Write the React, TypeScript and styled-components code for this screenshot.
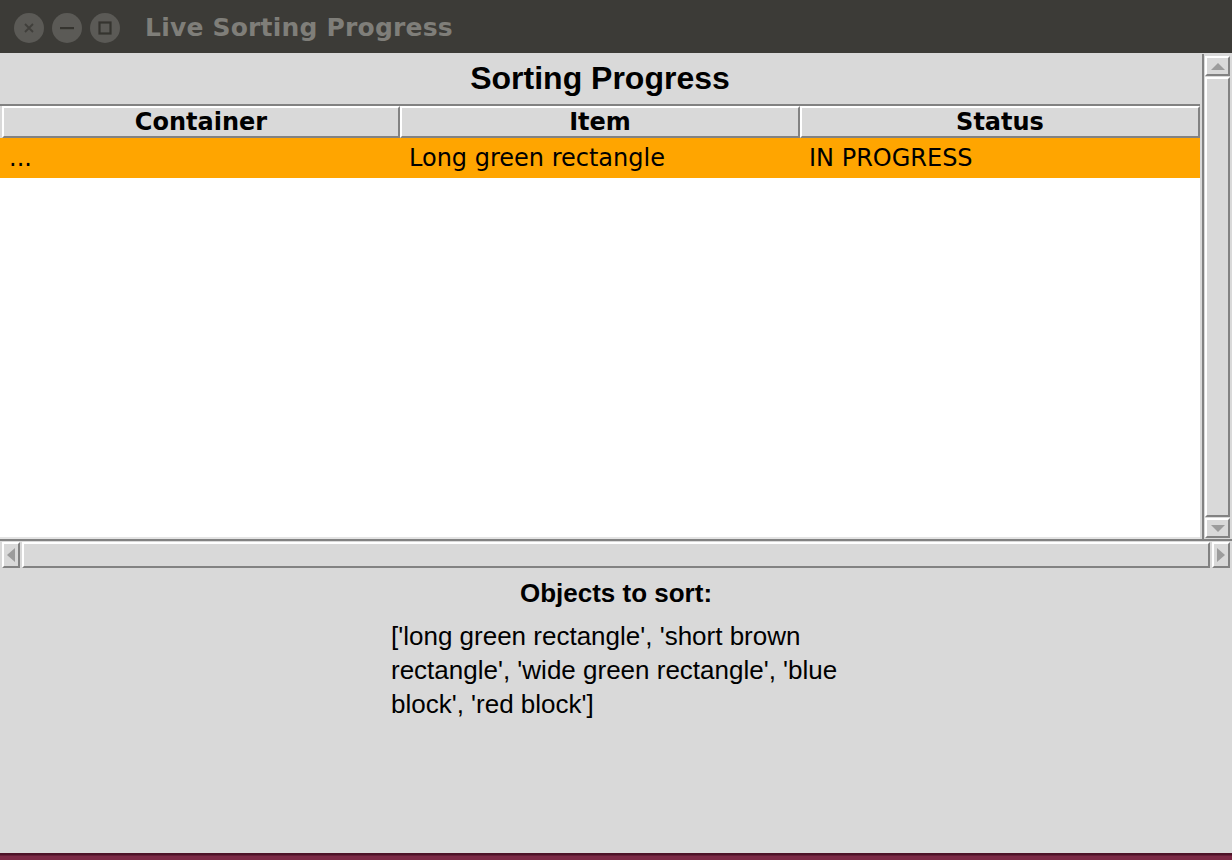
import React from "react"
import styled, { createGlobalStyle, css } from "styled-components"

const GlobalStyle = createGlobalStyle`
  html, body {
    margin: 0;
    padding: 0;
    overflow: hidden;
    background: #3c3b37;
  }
`

const columns = ["Container", "Item", "Status"]

const rows = [
  { container: "...", item: "Long green rectangle", status: "IN PROGRESS", active: true },
]

const objects = [
  "long green rectangle",
  "short brown rectangle",
  "wide green rectangle",
  "blue block",
  "red block",
]

type Dir = "up" | "down" | "left" | "right"

const arrowPoints: Record<Dir, string> = {
  up: "0,7 7,0 14,7",
  down: "0,0 14,0 7,7",
  left: "8,0 8,14 0,7",
  right: "0,0 8,7 0,14",
}

const Arrow = ({ dir }: { dir: Dir }) => {
  const vertical = dir === "up" || dir === "down"
  return (
    <svg width={vertical ? 14 : 8} height={vertical ? 7 : 14} viewBox={vertical ? "0 0 14 7" : "0 0 8 14"}>
      <polygon points={arrowPoints[dir]} fill="#9c9c9c" />
    </svg>
  )
}

const App = () => {
  return (
    <Window>
      <GlobalStyle />
      <TitleBar>
        <WinButton>
          <svg width="12" height="12" viewBox="0 0 12 12">
            <path d="M2 2 L10 10 M10 2 L2 10" stroke="#403f3b" strokeWidth="1.8" />
          </svg>
        </WinButton>
        <WinButton>
          <svg width="16" height="4" viewBox="0 0 16 4">
            <rect x="1" y="1" width="14" height="2.2" fill="#35342f" />
          </svg>
        </WinButton>
        <WinButton>
          <svg width="14" height="14" viewBox="0 0 14 14">
            <rect x="1.5" y="1.5" width="11" height="11" fill="none" stroke="#35342f" strokeWidth="2.2" />
          </svg>
        </WinButton>
        <WindowTitle>Live Sorting Progress</WindowTitle>
      </TitleBar>

      <Body>
        <TopArea>
          <TreePanel>
            <PanelTitle>Sorting Progress</PanelTitle>
            <Tree>
              <HeaderRow>
                {columns.map(c => (
                  <HeaderCell key={c}>{c}</HeaderCell>
                ))}
              </HeaderRow>
              <TreeBody>
                {rows.map((r, i) => (
                  <Row key={i} active={r.active}>
                    <Cell>{r.container}</Cell>
                    <Cell>{r.item}</Cell>
                    <Cell>{r.status}</Cell>
                  </Row>
                ))}
              </TreeBody>
            </Tree>
          </TreePanel>

          <VScroll>
            <ScrollButton vertical>
              <Arrow dir="up" />
            </ScrollButton>
            <ScrollThumb />
            <ScrollButton vertical>
              <Arrow dir="down" />
            </ScrollButton>
          </VScroll>
        </TopArea>

        <HScroll>
          <ScrollButton>
            <Arrow dir="left" />
          </ScrollButton>
          <ScrollThumb />
          <ScrollButton>
            <Arrow dir="right" />
          </ScrollButton>
        </HScroll>

        <BottomPanel>
          <ObjectsLabel>Objects to sort:</ObjectsLabel>
          <ObjectsText>[{objects.map(o => `'${o}'`).join(", ")}]</ObjectsText>
        </BottomPanel>
      </Body>
      <DesktopEdge />
    </Window>
  )
}

export default App

const raised = css`
  box-sizing: border-box;
  background: #d9d9d9;
  border-style: solid;
  border-width: 2px;
  border-color: #ffffff #828282 #828282 #ffffff;
`

const Window = styled.div`
  width: 1232px;
  height: 860px;
  display: flex;
  flex-direction: column;
  background: #d9d9d9;
  overflow: hidden;
`

const TitleBar = styled.div`
  height: 53px;
  flex: none;
  display: flex;
  align-items: center;
  gap: 8px;
  padding: 2px 0 0 14px;
  background: #3c3b37;
  box-sizing: border-box;
`

const WinButton = styled.div`
  width: 30px;
  height: 30px;
  border-radius: 50%;
  background: #5b5a56;
  display: flex;
  align-items: center;
  justify-content: center;
`

const WindowTitle = styled.div`
  margin-left: 17px;
  color: #7f7e79;
  font-family: "DejaVu Sans", sans-serif;
  font-weight: bold;
  font-size: 25px;
  letter-spacing: 0.2px;
  line-height: 30px;
  white-space: nowrap;
`

const Body = styled.div`
  flex: 1;
  display: flex;
  flex-direction: column;
  min-height: 0;
`

const TopArea = styled.div`
  height: 486px;
  flex: none;
  display: grid;
  grid-template-columns: 1200px 32px;
`

const TreePanel = styled.div`
  display: flex;
  flex-direction: column;
  min-height: 0;
`

const PanelTitle = styled.div`
  height: 51px;
  flex: none;
  display: flex;
  align-items: center;
  justify-content: center;
  font-family: "Liberation Sans", Arial, sans-serif;
  font-weight: bold;
  font-size: 32px;
  color: #000;
`

const Tree = styled.div`
  flex: 1;
  display: flex;
  flex-direction: column;
  border-top: 2px solid #828282;
  border-bottom: 2px solid #e4e4e4;
  min-height: 0;
`

const HeaderRow = styled.div`
  height: 32px;
  flex: none;
  display: grid;
  grid-template-columns: 398px 400px 400px;
  padding-left: 2px;
  background: #d9d9d9;
`

const HeaderCell = styled.div`
  ${raised};
  display: flex;
  align-items: center;
  justify-content: center;
  font-family: "DejaVu Sans", sans-serif;
  font-weight: bold;
  font-size: 24px;
  color: #000;
  white-space: nowrap;
`

const TreeBody = styled.div`
  flex: 1;
  background: #ffffff;
`

const Row = styled.div<{ active?: boolean }>`
  height: 40px;
  display: grid;
  grid-template-columns: 400px 400px 400px;
  align-items: center;
  background: ${p => (p.active ? "#ffa500" : "#ffffff")};
`

const Cell = styled.div`
  padding-left: 9px;
  font-family: "DejaVu Sans", sans-serif;
  font-size: 24px;
  color: #000;
  white-space: nowrap;
  overflow: hidden;
`

const VScroll = styled.div`
  margin: 1px 0 0 2px;
  border-left: 2px solid #828282;
  padding: 2px 2px 1px 1px;
  display: flex;
  flex-direction: column;
  gap: 1px;
  min-height: 0;
`

const ScrollButton = styled.div<{ vertical?: boolean }>`
  ${raised};
  flex: none;
  display: flex;
  align-items: center;
  justify-content: center;
  ${p => (p.vertical ? "height: 20px;" : "width: 18px;")}
`

const ScrollThumb = styled.div`
  ${raised};
  flex: 1;
`

const HScroll = styled.div`
  height: 29px;
  flex: none;
  box-sizing: border-box;
  border-top: 2px solid #828282;
  padding: 1px 2px 0 2px;
  display: flex;
  gap: 2px;
`

const BottomPanel = styled.div`
  flex: 1;
  display: flex;
  flex-direction: column;
  align-items: center;
  padding-top: 10px;
`

const ObjectsLabel = styled.div`
  font-family: "Liberation Sans", Arial, sans-serif;
  font-weight: bold;
  font-size: 26px;
  line-height: 30px;
  color: #000;
`

const ObjectsText = styled.div`
  width: 450px;
  margin-top: 11px;
  font-family: "Liberation Sans", Arial, sans-serif;
  font-size: 26px;
  line-height: 34px;
  color: #000;
`

const DesktopEdge = styled.div`
  height: 7px;
  flex: none;
  background: linear-gradient(to bottom, #4d1227 0, #4d1227 2px, #7b2a46 3px, #7b2a46 100%);
`
